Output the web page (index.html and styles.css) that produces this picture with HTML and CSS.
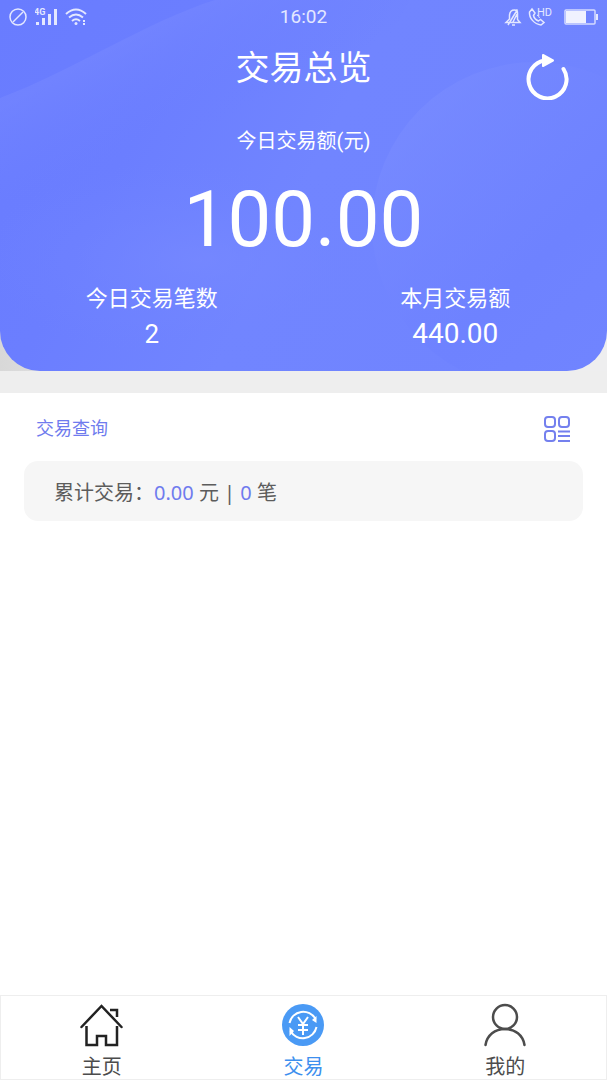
FILE: index.html
```html
<!DOCTYPE html>
<html lang="zh-CN">
<head>
    <meta charset="UTF-8">
    <meta name="viewport" content="width=device-width, initial-scale=1.0">
    <title>交易总览</title>
    <link rel="stylesheet" href="styles.css">
</head>
<body>
    <header class="overview">
        <svg class="overview-bg" viewBox="0 0 607 371" preserveAspectRatio="none" aria-hidden="true">
            <defs>
                <linearGradient id="base" x1="0" y1="0" x2="1" y2="0.3">
                    <stop offset="0" stop-color="#697cff"/>
                    <stop offset="0.3" stop-color="#6b7eff"/>
                    <stop offset="0.6" stop-color="#7185ff"/>
                    <stop offset="1" stop-color="#7084ff"/>
                </linearGradient>
                <linearGradient id="band" gradientUnits="userSpaceOnUse" x1="110" y1="50" x2="160" y2="150">
                    <stop offset="0" stop-color="#7889ff" stop-opacity="0.5"/>
                    <stop offset="1" stop-color="#6a7dff" stop-opacity="0"/>
                </linearGradient>
                <linearGradient id="disc" x1="0" y1="0" x2="0.8" y2="0.8">
                    <stop offset="0" stop-color="#8092ff" stop-opacity="0.6"/>
                    <stop offset="0.7" stop-color="#6b7fff" stop-opacity="0.4"/>
                    <stop offset="1" stop-color="#6b7fff" stop-opacity="0"/>
                </linearGradient>
                <radialGradient id="glow">
                    <stop offset="0" stop-color="#7789ff" stop-opacity="0.7"/>
                    <stop offset="1" stop-color="#6f83ff" stop-opacity="0"/>
                </radialGradient>
            </defs>
            <rect width="607" height="371" fill="url(#base)"/>
            <path d="M0 98C70 72 150 20 215 0H410L300 200H0Z" fill="url(#band)"/>
            <ellipse cx="200" cy="260" rx="220" ry="100" fill="url(#glow)"/>
            <circle cx="535" cy="225" r="163" fill="url(#disc)"/>
        </svg>
        <div class="status-bar">
            <div class="status-group">
                <svg width="18" height="18" viewBox="0 0 18 18" fill="none" stroke="#e4e8ff" stroke-width="1.5">
                    <circle cx="9" cy="9" r="8"/>
                    <path d="M4 14L14 4"/>
                </svg>
                <svg class="signal" width="24" height="22" viewBox="0 -2 24 22" fill="#e4e8ff">
                    <text x="-1" y="7" class="tiny">4G</text>
                    <rect x="1" y="14" width="3" height="3"/>
                    <rect x="7" y="10" width="3" height="7"/>
                    <rect x="13" y="6" width="3" height="11"/>
                    <rect x="19" y="1" width="3" height="16"/>
                </svg>
                <svg width="22" height="18" viewBox="0 0 22 18" fill="none" stroke="#e4e8ff" stroke-width="2">
                    <path d="M1 6Q11-3 21 6M4 9.500Q11 3.500 18 9.500M7 13Q11 9.500 15 13"/>
                    <circle cx="11" cy="15.500" r="1.500" fill="#e4e8ff" stroke="none"/>
                    <path d="M19 12V17" stroke-dasharray="2 1"/>
                </svg>
            </div>
            <span class="clock">16:02</span>
            <div class="status-group status-right">
                <svg width="18" height="18" viewBox="0 0 18 18" fill="none" stroke="#e4e8ff" stroke-width="1.500">
                    <path d="M2 14.500H16L13.500 11.500V5Q13.500 2 10.500 2Q6 2 5.500 7V11L2 14.500ZM8 17H11M13.500 1.500L4 17M13 6L9 14"/>
                </svg>
                <svg width="28" height="22" viewBox="0 -2 28 22" fill="none" stroke="#e4e8ff" stroke-width="1.500">
                    <path d="M4 1L1.500 4C1 10 6 16 13 17L16 14.500L12.500 11.500L10.500 13C8 12 6 10 5.500 7.500L7 5Z"/>
                    <path d="M9 7Q11 8 11.500 10" stroke-width="1"/>
                    <text x="9" y="8" class="hd" fill="#e4e8ff" stroke="none">HD</text>
                </svg>
                <svg class="battery" width="34" height="16" viewBox="0 0 34 16">
                    <rect x="1" y="1" width="30" height="14" rx="1" fill="none" stroke="#d4daff" stroke-width="1.500"/>
                    <rect x="2" y="2" width="20" height="12" fill="#f0f2ff"/>
                    <rect x="32" y="5" width="2" height="6" fill="#e4e8ff"/>
                </svg>
            </div>
        </div>
        <div class="title-row">
            <h1>交易总览</h1>
            <button class="refresh" type="button" aria-label="刷新">
                <svg width="44" height="48" viewBox="0 0 44 48" fill="none" stroke="#fff" stroke-width="4" stroke-linecap="round">
                    <path d="M38.500 17A19 19 0 1 1 20 8.500"/>
                    <path d="M18 3L28 8.500L18 14Z" fill="#fff" stroke-width="2" stroke-linejoin="round"/>
                </svg>
            </button>
        </div>
        <p class="today-label">今日交易额(元)</p>
        <p class="today-amount">100.00</p>
        <div class="stats">
            <div class="stat">
                <p class="stat-label">今日交易笔数</p>
                <p class="stat-value count">2</p>
            </div>
            <div class="stat">
                <p class="stat-label">本月交易额</p>
                <p class="stat-value">440.00</p>
            </div>
        </div>
    </header>
    <main>
        <div class="query-head">
            <h2>交易查询</h2>
            <button class="filter" type="button" aria-label="筛选">
                <svg width="28" height="28" viewBox="0 0 28 28" fill="none" stroke="#7480ee" stroke-width="2">
                    <rect x="2" y="2" width="10" height="10" rx="3"/>
                    <rect x="16" y="2" width="10" height="10" rx="3"/>
                    <rect x="2" y="16" width="10" height="10" rx="3"/>
                    <path d="M15 16.500H27M15 21H27M15 26H27"/>
                </svg>
            </button>
        </div>
        <p class="total">累计交易：<span>0.00</span> 元 | <span>0</span> 笔</p>
    </main>
    <nav class="tabs">
        <a href="#home">
            <svg width="44" height="44" viewBox="0 0 44 44" fill="none" stroke="#222" stroke-width="2.500">
                <path d="M1.500 24L21.500 3L41.500 24" stroke-linecap="round"/>
                <path d="M6.500 23V42H17V33H26V42H37V23M30 7H37V14"/>
            </svg>
            <span>主页</span>
        </a>
        <a href="#trade" class="active">
            <svg width="44" height="44" viewBox="0 0 44 44" fill="none" stroke="#fff" stroke-width="2">
                <circle cx="22" cy="22" r="21" fill="#4a9af5" stroke="none"/>
                <path d="M8.500 20A14 14 0 0 1 34.500 16M35.500 24A14 14 0 0 1 9.500 28"/>
                <path d="M35.500 13V20L31 17ZM8.500 24V33L13 28Z" fill="#fff" stroke="none"/>
                <path d="M17 14L22 21L27 14M22 21V32M17 22H27M17 27H27"/>
            </svg>
            <span>交易</span>
        </a>
        <a href="#mine">
            <svg width="44" height="44" viewBox="0 0 44 44" fill="none" stroke="#4c4c4c" stroke-width="2.500" stroke-linecap="round">
                <circle cx="22" cy="14" r="12"/>
                <path d="M2.500 42C4 32 12 26 22 26C32 26 40 32 41.500 42"/>
            </svg>
            <span>我的</span>
        </a>
    </nav>
</body>
</html>
```
FILE: styles.css
```css
* {
    box-sizing: border-box;
}
body {
    margin: 0;
    min-height: 100vh;
    display: flex;
    flex-direction: column;
    font-family: Roboto, 'Noto Sans CJK SC', sans-serif;
    background: linear-gradient(90deg, #d8d8d8, #eeeeef 30%, #eeeeef);
}
h1, h2, p {
    margin: 0;
    font-weight: 400;
}
button {
    padding: 0;
    border: 0;
    background: none;
    cursor: pointer;
}
svg {
    display: block;
}
.overview {
    position: relative;
    overflow: hidden;
    isolation: isolate;
    padding-bottom: 18px;
    border-radius: 0 0 40px 40px;
    color: #fff;
    text-align: center;
}
.overview-bg {
    position: absolute;
    inset: 0;
    width: 100%;
    height: 100%;
    z-index: -1;
}
.status-bar {
    display: grid;
    grid-template-columns: 1fr auto 1fr;
    align-items: center;
    height: 32px;
    padding: 0 9px;
}
.status-group {
    display: flex;
    align-items: center;
    gap: 6px;
}
.status-right {
    justify-content: flex-end;
}
.signal {
    margin-left: 2px;
}
.battery {
    margin-left: 2px;
}
.tiny {
    font-size: 9px;
    font-weight: 700;
}
.hd {
    font-size: 11px;
}
.clock {
    font-size: 19px;
    line-height: 34px;
    color: #e4e8ff;
}
.title-row {
    display: grid;
    grid-template-columns: 1fr auto 1fr;
    height: 68px;
    padding: 12px 38px 0;
}
.title-row h1 {
    grid-column: 2;
    font-size: 34px;
    line-height: 48px;
}
.refresh {
    justify-self: end;
    align-self: end;
}
.today-label {
    margin-top: 27px;
    font-size: 20px;
    line-height: 28px;
}
.today-amount {
    margin-top: 25px;
    font-size: 78px;
    line-height: 80px;
}
.stats {
    display: grid;
    grid-template-columns: 1fr 1fr;
    margin-top: 23px;
}
.stat-label {
    font-size: 22px;
    line-height: 32px;
}
.stat-value {
    font-size: 28px;
    line-height: 38px;
}
.stat-value.count {
    font-size: 26px;
}
main {
    flex: 1;
    padding: 20px 24px;
    border-top: 22px solid #eeeeee;
    background-color: #fff;
}
.query-head {
    display: flex;
    justify-content: space-between;
    align-items: center;
    padding: 0 12px;
}
.query-head h2 {
    font-size: 18px;
    line-height: 32px;
    color: #6f7bee;
}
.total {
    margin-top: 16px;
    padding: 16px 30px 12px;
    border-radius: 14px;
    background-color: #f6f6f6;
    font-family: 'Noto Sans', 'Noto Sans CJK SC', sans-serif;
    font-size: 20px;
    line-height: 32px;
    color: #5c5c5c;
}
.total span {
    color: #6f7bee;
}
.tabs {
    display: grid;
    grid-template-columns: repeat(3, 1fr);
    border: 1px solid #eee;
    background-color: #fff;
}
.tabs a {
    display: flex;
    flex-direction: column;
    align-items: center;
    gap: 8px;
    padding-top: 7px;
    font-size: 20px;
    line-height: 24px;
    color: #4c4c4c;
    text-decoration: none;
}
.tabs a.active {
    color: #3d8fee;
}
```
